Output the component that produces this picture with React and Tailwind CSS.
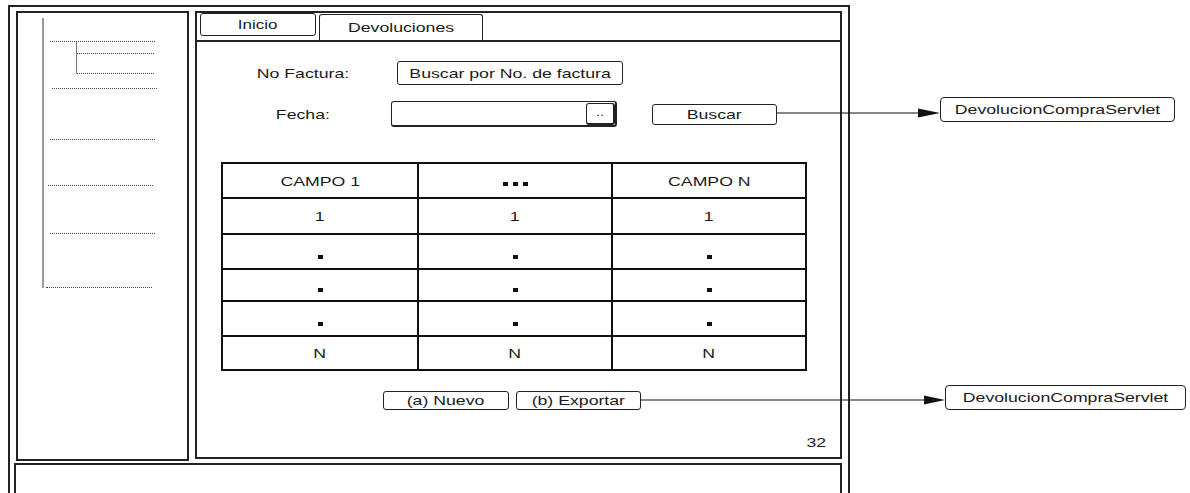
import React from 'react';

// the mock-up's text is drawn wide, so every label is stretched horizontally
const Wide = ({ children, className = '' }) => (
  <span className={`inline-block origin-center scale-x-[1.36] whitespace-nowrap ${className}`}>{children}</span>
);

const Dot = () => <div className="mt-[10px] h-[4px] w-[5px] bg-[#111]" />;

const Dotted = ({ className = '' }) => (
  <div className={`h-0 border-t border-dotted border-[#444] ${className}`} />
);

const rows = [
  { h: 'h-[36px]', cells: ['1', '1', '1'] },
  { h: 'h-[35px]', cells: ['.', '.', '.'] },
  { h: 'h-[32px]', cells: ['.', '.', '.'] },
  { h: 'h-[35px]', cells: ['.', '.', '.'] },
  { h: 'h-[32px]', cells: ['N', 'N', 'N'], last: true },
];

const colW = ['w-[196px] border-r-2', 'w-[194px] border-r-2', 'flex-1'];

const Sidebar = () => (
  <div className="h-[450px] w-[173px] border-2 border-[#222] pl-[24px] pt-[5px]">
    <div className="flex h-[270px] flex-col border-l-2 border-[#9a9a9a]">
      <Dotted className="ml-[6px] mt-[23px] w-[105px]" />
      <div className="ml-[32px] flex h-[32px] flex-col border-l border-[#777]">
        <Dotted className="mt-[11px] w-[77px]" />
        <Dotted className="mt-[19px] w-[77px]" />
      </div>
      <Dotted className="ml-[8px] mt-[14px] w-[105px]" />
      <Dotted className="ml-[6px] mt-[50px] w-[105px]" />
      <Dotted className="ml-[4px] mt-[45px] w-[105px]" />
      <Dotted className="ml-[6px] mt-[47px] w-[105px]" />
      <Dotted className="ml-[2px] mt-auto w-[106px]" />
    </div>
  </div>
);

const Table = () => (
  <div className="ml-[24px] mt-[35px] w-[586px] border-2 border-[#111]">
    <div className="flex h-[35px] border-b-2 border-[#111]">
      <div className="flex w-[196px] items-center justify-center border-r-2 border-[#111] pt-[2px]"><Wide>CAMPO 1</Wide></div>
      <div className="flex w-[194px] items-center justify-center gap-[5px] border-r-2 border-[#111] pt-[6px]">
        <div className="h-[4px] w-[5px] bg-[#111]" />
        <div className="h-[4px] w-[5px] bg-[#111]" />
        <div className="h-[4px] w-[5px] bg-[#111]" />
      </div>
      <div className="flex flex-1 items-center justify-center pt-[1px]"><Wide>CAMPO N</Wide></div>
    </div>
    {rows.map((r, i) => (
      <div key={i} className={`flex ${r.h} ${r.last ? '' : 'border-b-2'} border-[#111]`}>
        {r.cells.map((c, j) => (
          <div key={j} className={`flex items-center justify-center border-[#111] ${colW[j]}`}>
            {c === '.' ? <Dot /> : <Wide>{c}</Wide>}
          </div>
        ))}
      </div>
    ))}
  </div>
);

const Main = () => (
  <div className="flex h-[448px] w-[647px] flex-col border-2 border-[#222]">
    <div className="flex h-[29px] items-start border-b-2 border-[#222] pl-[3px]">
      <div className="flex h-[23px] w-[116px] items-center justify-center rounded-[3px] border border-[#222] pt-[2px] text-[12.5px]">
        <Wide>Inicio</Wide>
      </div>
      <div className="ml-[3px] mt-[1px] flex h-[26px] w-[164px] items-center justify-center rounded-t-[3px] border border-b-0 border-[#222]">
        <Wide>Devoluciones</Wide>
      </div>
    </div>

    <div className="mt-[19px] flex h-[24px] items-center">
      <div className="ml-[31px] w-[150px] text-center"><Wide>No Factura:</Wide></div>
      <div className="ml-[19px] flex h-[24px] w-[226px] items-center justify-center rounded-[3px] border border-[#222]">
        <Wide>Buscar por No. de factura</Wide>
      </div>
    </div>

    <div className="mt-[16px] flex h-[26px] items-center">
      <div className="ml-[31px] w-[150px] text-center"><Wide>Fecha:</Wide></div>
      <div className="ml-[13px] flex h-[26px] w-[226px] items-start justify-end rounded-[3px] border border-r-2 border-b-2 border-[#222] pt-[1px]">
        <div className="flex h-[22px] w-[29px] items-end justify-center rounded-[3px] border border-r-2 border-b-2 border-[#222] pb-[5px] text-[11px]">
          <Wide>..</Wide>
        </div>
      </div>
      <div className="ml-[35px] flex h-[21px] w-[125px] items-center justify-center rounded-[3px] border border-[#222]">
        <Wide>Buscar</Wide>
      </div>
    </div>

    <Table />

    <div className="ml-[186px] mt-[20px] flex gap-[7px]">
      <div className="flex h-[19px] w-[126px] items-center justify-center rounded-[3px] border border-[#222]"><Wide>(a) Nuevo</Wide></div>
      <div className="flex h-[19px] w-[125px] items-center justify-center rounded-[3px] border border-[#222]"><Wide>(b) Exportar</Wide></div>
    </div>

    <div className="mt-auto flex justify-end pb-[8px] pr-[17px]"><Wide>32</Wide></div>
  </div>
);

export default function App() {
  return (
    <div className="relative h-[493px] w-[1190px] overflow-hidden bg-white font-['Liberation_Sans',Arial,sans-serif] text-[13px] leading-none text-[#1a1a1a]">
      <div className="ml-[8px] mt-[5px] h-[500px] w-[842px] border-2 border-[#222] pl-[6px] pt-[4px]">
        <div className="flex gap-[6px]">
          <Sidebar />
          <Main />
        </div>
        <div className="-ml-[2px] mt-[2px] h-[40px] w-[828px] border-2 border-[#222]" />
      </div>

      {/* connectors to the servlet */}
      <svg className="pointer-events-none absolute left-0 top-0" width="1190" height="493">
        <line x1="777" y1="113" x2="920" y2="113" stroke="#111" strokeWidth="1.2" />
        <polygon points="918,108.5 940,113 918,117.5" fill="#111" />
        <line x1="641" y1="400" x2="926" y2="400" stroke="#111" strokeWidth="1.2" />
        <polygon points="924,395.5 945,400 924,404.5" fill="#111" />
      </svg>
      <div className="absolute left-[940px] top-[97px] flex h-[25px] w-[235px] items-center justify-center rounded-[4px] border border-[#222]">
        <Wide>DevolucionCompraServlet</Wide>
      </div>
      <div className="absolute left-[945px] top-[385px] flex h-[25px] w-[241px] items-center justify-center rounded-[4px] border border-[#222]">
        <Wide>DevolucionCompraServlet</Wide>
      </div>
    </div>
  );
}
